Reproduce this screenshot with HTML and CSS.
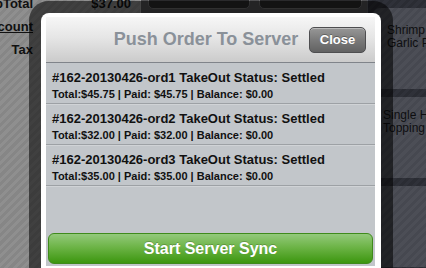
FILE: index.html
```html
<!DOCTYPE html>
<html lang="en">
<head>
    <meta charset="UTF-8">
    <meta name="viewport" content="width=device-width, initial-scale=1.0">
    <title>Push Order To Server</title>
    <link rel="stylesheet" href="styles.css">
</head>
<body>
    <div class="screen">
        <section class="ticket">
            <div class="total-row">
                <span class="total-label">SubTotal</span>
                <span class="total-value">$37.00</span>
            </div>
            <div class="total-row">
                <span class="total-label discount">Discount</span>
            </div>
            <div class="total-row">
                <span class="total-label">Tax</span>
            </div>
        </section>

        <section class="center">
            <div class="actions">
                <span class="action-btn"></span>
                <span class="action-btn"></span>
            </div>
        </section>

        <section class="menu">
            <div class="tile tile-first">Shrimp<br>Garlic Prawns</div>
            <div class="tile tile-second">Single Hot Dog<br>Topping</div>
            <div class="tile"></div>
        </section>
    </div>

    <div class="modal">
        <div class="modal-head">
            <h1 class="modal-title">Push Order To Server</h1>
            <button class="close-btn" type="button">Close</button>
        </div>
        <div class="modal-body">
            <ul class="order-list">
                <li class="order">
                    <div class="order-title">#162-20130426-ord1 TakeOut Status: Settled</div>
                    <div class="order-info">Total:$45.75 | Paid: $45.75 | Balance: $0.00</div>
                </li>
                <li class="order">
                    <div class="order-title">#162-20130426-ord2 TakeOut Status: Settled</div>
                    <div class="order-info">Total:$32.00 | Paid: $32.00 | Balance: $0.00</div>
                </li>
                <li class="order">
                    <div class="order-title">#162-20130426-ord3 TakeOut Status: Settled</div>
                    <div class="order-info">Total:$35.00 | Paid: $35.00 | Balance: $0.00</div>
                </li>
            </ul>
            <button class="sync-btn" type="button">Start Server Sync</button>
        </div>
    </div>
</body>
</html>
```

FILE: styles.css
```css
body {
    margin: 0;
    width: 426px;
    height: 268px;
    overflow: hidden;
    font-family: "Liberation Sans", Arial, sans-serif;
    background-color: #3a3a3c;
}

/* background: the POS screen behind the dialog */
.screen {
    display: flex;
    height: 268px;
}
.ticket {
    width: 140px;
    flex-shrink: 0;
    background: repeating-linear-gradient(135deg, #8f8f8f 0 3px, #868686 3px 6px);
    box-sizing: border-box;
    padding-right: 9px;
}
.total-row {
    display: flex;
    align-items: baseline;
    height: 23px;
    line-height: 23px;
    font-size: 13px;
    font-weight: bold;
    color: #111;
}
.total-row:first-child {
    margin-top: -8px;
}
.total-label {
    width: 33px;
    flex-shrink: 0;
    display: flex;
    justify-content: flex-end;
    white-space: nowrap;
}
.discount {
    text-decoration: underline;
}
.total-value {
    margin-left: auto;
}
.center {
    width: 227px;
    flex-shrink: 0;
    background-color: #505052;
    border-left: 1px solid #9a9a9a;
    box-sizing: border-box;
}
.actions {
    display: flex;
    gap: 9px;
    padding: 0 5px 0 7px;
    margin-top: -10px;
}
.action-btn {
    width: 101px;
    height: 17px;
    border-radius: 5px;
    background-color: #2a2a2c;
    border: 1px solid #6a6a6c;
}
.action-btn + .action-btn {
    width: 102px;
}
.menu {
    flex: 1;
    display: flex;
    flex-direction: column;
    gap: 8px;
    padding: 8px 0 0 5px;
    background: repeating-linear-gradient(135deg, #2f3139 0 3px, #2a2c33 3px 6px);
    border-left: 1px solid #55575e;
}
.tile {
    height: 81px;
    flex-shrink: 0;
    box-sizing: border-box;
    padding: 16px 0 0 14px;
    border-radius: 7px 0 0 7px;
    background: repeating-linear-gradient(135deg, #4c4e56 0 3px, #464850 3px 6px);
    font-size: 12px;
    line-height: 13px;
    color: #0e0e10;
    white-space: nowrap;
    overflow: hidden;
}
.tile-second {
    padding: 12px 0 0 10px;
}

/* dialog */
.modal {
    position: absolute;
    left: 41px;
    top: 13px;
    width: 340px;
    height: 255px;
    box-sizing: border-box;
    padding: 4px 6px 2px 5px;
    display: flex;
    flex-direction: column;
    background-color: #fff;
    border-radius: 8px 8px 0 0;
    box-shadow: 0 0 0 12px rgba(0, 0, 0, 0.55);
}
.modal-head {
    height: 46px;
    flex-shrink: 0;
    box-sizing: border-box;
    display: grid;
    grid-template-columns: 1fr auto 1fr;
    align-items: center;
    padding-right: 9px;
    background: linear-gradient(#f6f6f6, #e6e6e6 45%, #cbcbcb);
    border-bottom: 1px solid #80848a;
}
.modal-title {
    grid-column: 2;
    margin: 0;
    font-size: 18px;
    font-weight: bold;
    color: #8a9199;
    white-space: nowrap;
}
.close-btn {
    grid-column: 3;
    justify-self: end;
    width: 57px;
    height: 26px;
    padding: 0;
    border: 1px solid #4e4e50;
    border-radius: 5px;
    background: linear-gradient(#979797, #7a7a7a 50%, #626262);
    box-shadow: inset 0 1px 0 rgba(255, 255, 255, 0.35);
    font-family: inherit;
    font-size: 13px;
    font-weight: bold;
    color: #fff;
    text-shadow: 0 -1px 0 rgba(0, 0, 0, 0.3);
}
.modal-body {
    flex: 1;
    display: flex;
    flex-direction: column;
    background-color: #c2c6ca;
}
.order-list {
    list-style: none;
    margin: 0;
    padding: 0;
}
.order {
    height: 41px;
    box-sizing: border-box;
    padding: 7px 0 0 6px;
    border-bottom: 1px solid #9da1a5;
    box-shadow: 0 1px 0 #d0d3d6;
    color: #111;
    font-weight: bold;
    white-space: nowrap;
}
.order-title {
    font-size: 13px;
    line-height: 16px;
}
.order-info {
    margin-top: 1px;
    font-size: 11px;
    line-height: 14px;
}
.sync-btn {
    margin: auto 2px 2px;
    height: 31px;
    padding: 0;
    border: 1px solid #3f8a1c;
    border-radius: 6px;
    background: linear-gradient(#93c97b, #6db447 45%, #3c960f);
    font-family: inherit;
    font-size: 16px;
    font-weight: bold;
    color: #fff;
    text-shadow: 0 -1px 0 rgba(0, 0, 0, 0.2);
}
```
